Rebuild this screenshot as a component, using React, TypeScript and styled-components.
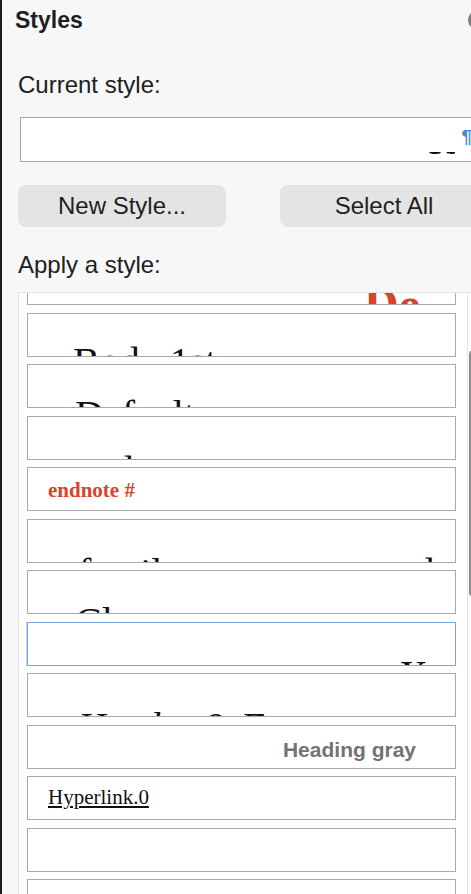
import { useLayoutEffect, useRef } from 'react';
import styled, { createGlobalStyle, css } from 'styled-components';

const GlobalStyle = createGlobalStyle`
  html,
  body {
    margin: 0;
    padding: 0;
    background: #f7f7f7;
    overflow: hidden;
  }

  body {
    font-family: 'Liberation Sans', Arial, sans-serif;
    color: #1f1f1f;
  }
`;

const Window = styled.div`
  display: flex;
  width: 506px;
  height: 894px;
  overflow: hidden;
`;

const DarkEdge = styled.div`
  flex: 0 0 2px;
  background: #1b1b1b;
`;

const Pane = styled.section`
  flex: 0 0 504px;
  box-sizing: border-box;
  padding: 6px 16px 0;
  background: #f7f7f7;
`;

const TitleRow = styled.header`
  display: flex;
  align-items: center;
  justify-content: space-between;
  height: 28px;
`;

const Title = styled.h1`
  margin: 0 0 0 -3px;
  font-size: 23px;
  line-height: 28px;
  font-weight: 700;
  color: #1e1e1e;
`;

const HelpDot = styled.span`
  width: 20px;
  height: 20px;
  margin-right: 2px;
  border-radius: 50%;
  background: #7c7c7c;
`;

const SectionLabel = styled.p<{ $top: number }>`
  margin: ${({ $top }) => $top}px 0 0;
  font-size: 24px;
  line-height: 28px;
  color: #202020;
`;

const CurrentStyleBox = styled.div`
  display: flex;
  justify-content: flex-end;
  box-sizing: border-box;
  height: 45px;
  margin: 18px 0 0 2px;
  padding-right: 17px;
  border: 1px solid #a4a4a4;
  background: #fff;
  overflow: hidden;
`;

const PreviewClip = styled.span`
  display: block;
  height: 21px;
  margin: 15px 6px 0 0;
  overflow: hidden;
  font-family: 'Liberation Serif', 'Times New Roman', serif;
  font-size: 52px;
  line-height: 52px;
  color: #111;
`;

const Pilcrow = styled.span`
  margin-top: 9px;
  font-size: 19px;
  line-height: 19px;
  font-weight: 700;
  color: #4a86dc;
`;

const ButtonRow = styled.div`
  display: flex;
  gap: 54px;
  margin-top: 23px;
`;

const PaneButton = styled.button`
  flex: 0 0 208px;
  height: 42px;
  padding: 0;
  border: none;
  border-radius: 8px;
  background: #e4e4e4;
  font-family: inherit;
  font-size: 24px;
  color: #1f1f1f;
`;

const StyleList = styled.div`
  display: flex;
  height: 620px;
  margin-top: 13px;
  border-top: 1px solid #e4e4e4;
  border-left: 1px solid #e2e2e2;
  background: #fff;
`;

const ScrollArea = styled.div`
  flex: 0 0 448px;
  height: 100%;
  overflow: hidden;
`;

const Column = styled.div`
  display: flex;
  flex-direction: column;
  gap: 7.5px;
  width: 429px;
  padding-left: 8px;
  padding-bottom: 40px;
`;

const ScrollTrack = styled.div`
  flex: 0 0 14px;
  border-left: 1px solid #e6e6e6;
`;

const ScrollThumb = styled.div`
  width: 9px;
  height: 247px;
  margin: 57px 0 0 1px;
  border-radius: 5px;
  background: #888;
`;

type Face = 'serif' | 'sans';

interface ItemLook {
  $drop: number;
  $end?: boolean;
  $side: number;
  $selected?: boolean;
}

const StyleItem = styled.div<ItemLook>`
  display: flex;
  flex: 0 0 44px;
  justify-content: ${({ $end }) => ($end ? 'flex-end' : 'flex-start')};
  box-sizing: border-box;
  height: 44px;
  padding-top: ${({ $drop }) => $drop}px;
  ${({ $end, $side }) => ($end ? css`padding-right: ${$side}px;` : css`padding-left: ${$side}px;`)}
  border: 1px solid #a9a9a9;
  background: #fff;
  overflow: hidden;
  white-space: nowrap;

  ${({ $selected }) =>
    $selected &&
    css`
      border-color: #7ca5dd;
      box-shadow: -1px 0 0 rgba(124, 165, 221, 0.45);
    `}
`;

interface NameLook {
  $face: Face;
  $size: number;
  $bold?: boolean;
  $italic?: boolean;
  $underline?: boolean;
  $color?: string;
}

const StyleName = styled.span<NameLook>`
  font-family: ${({ $face }) =>
    $face === 'serif'
      ? `'Liberation Serif', 'Times New Roman', serif`
      : `'Liberation Sans', Arial, sans-serif`};
  font-size: ${({ $size }) => $size}px;
  line-height: ${({ $size }) => $size}px;
  font-weight: ${({ $bold }) => ($bold ? 700 : 400)};
  font-style: ${({ $italic }) => ($italic ? 'italic' : 'normal')};
  text-decoration: ${({ $underline }) => ($underline ? 'underline' : 'none')};
  color: ${({ $color }) => $color ?? '#111'};
`;

interface StyleEntry {
  name: string;
  face?: Face;
  size?: number;
  bold?: boolean;
  italic?: boolean;
  underline?: boolean;
  color?: string;
  drop?: number;
  side?: number;
  end?: boolean;
  selected?: boolean;
}

const RED = '#d8432e';

const styles: StyleEntry[] = [
  { name: 'De', size: 48, bold: true, color: RED, drop: 19, side: 35, end: true },
  { name: 'Body 1st', size: 40, drop: 28, side: 45 },
  { name: 'Default', size: 40, drop: 30, side: 47 },
  { name: 'endnote', size: 40, drop: 34, side: 48 },
  { name: 'endnote #', size: 21, bold: true, color: RED, drop: 12, side: 20 },
  { name: 'family tree source code', size: 40, drop: 33, side: 50 },
  { name: 'Close', size: 40, drop: 31, side: 47 },
  { name: 'X', size: 40, drop: 32, side: 27, end: true, selected: true },
  { name: 'Header & Footer', size: 38, italic: true, drop: 33, side: 50 },
  { name: 'Heading gray', face: 'sans', size: 21, bold: true, color: '#737373', drop: 13, side: 39, end: true },
  { name: 'Hyperlink.0', size: 21, underline: true, drop: 10, side: 20 },
  { name: '' },
  { name: '' },
];

function App() {
  const scrollRef = useRef<HTMLDivElement>(null);

  useLayoutEffect(() => {
    if (scrollRef.current) scrollRef.current.scrollTop = 32;
  }, []);

  return (
    <>
      <GlobalStyle />
      <Window>
        <DarkEdge />
        <Pane>
          <TitleRow>
            <Title>Styles</Title>
            <HelpDot />
          </TitleRow>

          <SectionLabel $top={37}>Current style:</SectionLabel>
          <CurrentStyleBox>
            <PreviewClip>v</PreviewClip>
            <Pilcrow>¶</Pilcrow>
          </CurrentStyleBox>

          <ButtonRow>
            <PaneButton>New Style...</PaneButton>
            <PaneButton>Select All</PaneButton>
          </ButtonRow>

          <SectionLabel $top={24}>Apply a style:</SectionLabel>
          <StyleList>
            <ScrollArea ref={scrollRef}>
              <Column>
                {styles.map((s, i) => (
                  <StyleItem
                    key={i}
                    $drop={s.drop ?? 0}
                    $side={s.side ?? 20}
                    $end={s.end}
                    $selected={s.selected}
                  >
                    {s.name && (
                      <StyleName
                        $face={s.face ?? 'serif'}
                        $size={s.size ?? 21}
                        $bold={s.bold}
                        $italic={s.italic}
                        $underline={s.underline}
                        $color={s.color}
                      >
                        {s.name}
                      </StyleName>
                    )}
                  </StyleItem>
                ))}
              </Column>
            </ScrollArea>
            <ScrollTrack>
              <ScrollThumb />
            </ScrollTrack>
          </StyleList>
        </Pane>
      </Window>
    </>
  );
}

export default App;
